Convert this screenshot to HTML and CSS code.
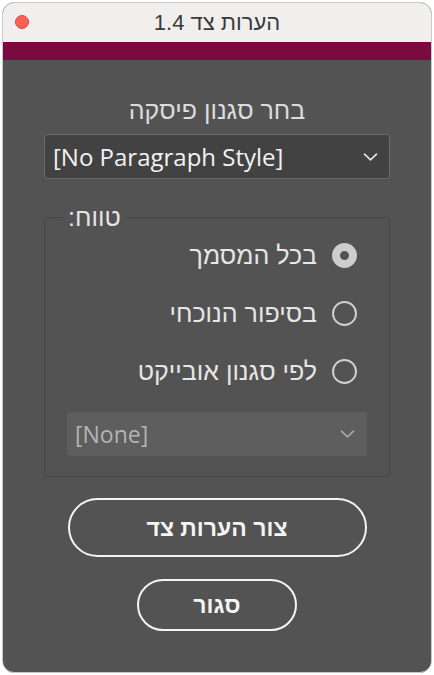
FILE: index.html
```html
<!DOCTYPE html>
<html lang="he">
<head>
<meta charset="utf-8">
<link rel="stylesheet" href="styles.css">
</head>
<body>
<div class="window">
  <div class="titlebar">
    <span class="close"></span>
    <span class="title" dir="rtl">הערות צד 1.4</span>
  </div>
  <div class="accent"></div>
  <div class="content">
    <div class="label" dir="rtl">בחר סגנון פיסקה</div>
    <div class="select">
      <span class="select-text">[No Paragraph Style]</span>
      <svg class="chev" width="15" height="8" viewBox="0 0 15 8"><path d="M1.5 1.2 L7.5 6.8 L13.5 1.2" fill="none" stroke="#e6e6e6" stroke-width="1.6" stroke-linecap="round" stroke-linejoin="round"/></svg>
    </div>
    <div class="group">
      <div class="legend" dir="rtl">טווח:</div>
      <div class="radio-row">
        <span class="radio-label" dir="rtl">בכל המסמך</span>
        <span class="radio checked"></span>
      </div>
      <div class="radio-row">
        <span class="radio-label" dir="rtl">בסיפור הנוכחי</span>
        <span class="radio"></span>
      </div>
      <div class="radio-row">
        <span class="radio-label" dir="rtl">לפי סגנון אובייקט</span>
        <span class="radio"></span>
      </div>
      <div class="select2">
        <span class="select2-text">[None]</span>
        <svg class="chev" width="15" height="8" viewBox="0 0 15 8"><path d="M1.5 1.2 L7.5 6.8 L13.5 1.2" fill="none" stroke="#a8a8a8" stroke-width="1.6" stroke-linecap="round" stroke-linejoin="round"/></svg>
      </div>
    </div>
    <div class="btn primary" dir="rtl">צור הערות צד</div>
    <div class="btn secondary" dir="rtl">סגור</div>
  </div>
</div>
</body>
</html>
```
FILE: styles.css
```css
html, body {
  margin: 0;
  padding: 0;
  background: #ffffff;
}
body {
  font-family: "Liberation Sans", "DejaVu Sans", sans-serif;
  width: 434px;
  height: 675px;
  overflow: hidden;
}
.window {
  margin: 2px 0 0 2px;
  width: 428px;
  height: 669px;
  border: 1px solid #c9c9c9;
  border-radius: 12px;
  overflow: hidden;
  display: flex;
  flex-direction: column;
  background: #535353;
}
.titlebar {
  height: 39px;
  background: #f0efee;
  display: flex;
  align-items: center;
  justify-content: center;
  position: relative;
}
.close {
  position: absolute;
  left: 12px;
  top: 12px;
  width: 14px;
  height: 14px;
  box-sizing: border-box;
  border-radius: 50%;
  background: #fe5f57;
  border: 0.5px solid #e2463f;
}
.title {
  font-size: 22px;
  color: #3a3a3a;
  line-height: 24px;
}
.accent {
  height: 18px;
  background: #7b0b3f;
}
.content {
  flex: 1;
  display: flex;
  flex-direction: column;
  align-items: center;
  padding-top: 36px;
}
.label {
  font-size: 25px;
  color: #dcdcdc;
  line-height: 28px;
}
.select {
  margin-top: 10px;
  width: 344px;
  height: 43px;
  box-sizing: content-box;
  border: 1px solid #6b6b6b;
  border-radius: 4px;
  background: #424242;
  display: flex;
  align-items: center;
  justify-content: space-between;
}
.select-text {
  font-family: "Open Sans", "Noto Sans", sans-serif;
  font-size: 24px;
  line-height: 28px;
  color: #f2f2f2;
  margin-left: 8px;
}
.chev {
  margin-right: 11px;
}
.group {
  margin-top: 38px;
  width: 344px;
  border: 1px solid #474747;
  border-radius: 4px;
  position: relative;
  display: flex;
  flex-direction: column;
  padding: 8px 0 20px;
}
.legend {
  position: absolute;
  top: -15px;
  left: 17px;
  padding: 0 6px;
  background: #535353;
  font-size: 25px;
  color: #e4e4e4;
  line-height: 28px;
}
.radio-row {
  display: flex;
  justify-content: flex-end;
  align-items: center;
  height: 58px;
  margin-right: 32px;
}
.radio-label {
  font-size: 25px;
  line-height: 28px;
  color: #e6e6e6;
  margin-right: 15px;
}
.radio {
  width: 25px;
  height: 25px;
  box-sizing: border-box;
  border-radius: 50%;
  border: 2.5px solid #cfcfcf;
}
.radio.checked {
  border: 8.5px solid #cdcdcd;
  background: #535353;
}
.select2 {
  margin: 12px 0 0 22px;
  width: 300px;
  height: 44px;
  border-radius: 4px;
  background: #5e5e5e;
  display: flex;
  align-items: center;
  justify-content: space-between;
}
.select2-text {
  font-family: "Open Sans", "Noto Sans", sans-serif;
  font-size: 23px;
  line-height: 28px;
  color: #b3b3b3;
  margin-left: 8px;
}
.select2 .chev {
  margin-right: 12px;
}
.btn {
  box-sizing: border-box;
  border: 2px solid #f4f4f4;
  border-radius: 30px;
  color: #f4f4f4;
  font-weight: bold;
  font-size: 23px;
  line-height: 28px;
  display: flex;
  align-items: center;
  justify-content: center;
}
.primary {
  margin-top: 21px;
  width: 299px;
  height: 59px;
}
.secondary {
  margin-top: 22px;
  width: 160px;
  height: 52px;
}
```
